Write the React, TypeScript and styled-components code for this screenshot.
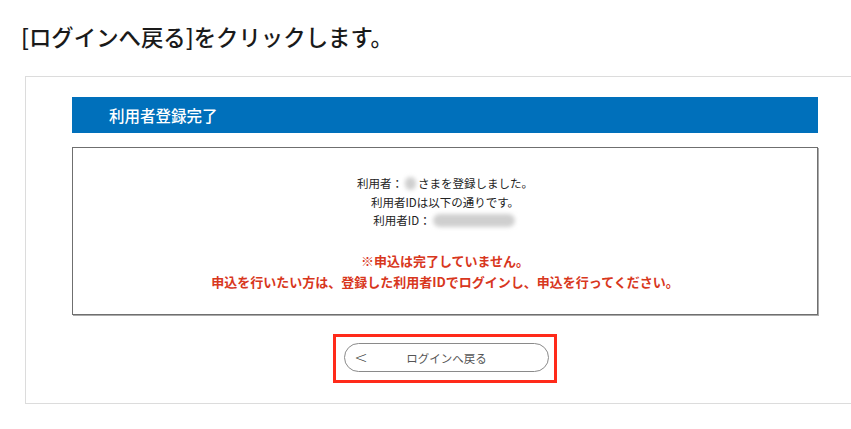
import React from "react";
import styled, { createGlobalStyle } from "styled-components";

const Global = createGlobalStyle`
  html, body { margin: 0; padding: 0; background: #fff; overflow: hidden; }
  body { font-family: "Noto Sans CJK JP", "Noto Sans", sans-serif; color: #222; }
`;

const Page = styled.div`
  width: 851px;
  height: 429px;
  overflow: hidden;
  padding-top: 21px;
  box-sizing: border-box;
`;

const Heading = styled.h1`
  margin: 0 0 0 21px;
  font-size: 22.4px;
  font-weight: 500;
  line-height: 30px;
  color: #1a1a1a;
`;

const Frame = styled.section`
  margin: 25px 0 0 25px;
  width: 860px;
  border: 1px solid #dcdcdc;
  padding: 20px 0 20px 46px;
  box-sizing: border-box;
`;

const Inner = styled.div`
  width: 746px;
  display: flex;
  flex-direction: column;
  align-items: center;
`;

const TitleBar = styled.div`
  align-self: stretch;
  height: 36px;
  background: #0070bb;
  color: #fff;
  font-size: 15.5px;
  font-weight: 500;
  display: flex;
  align-items: center;
  padding-left: 37px;
`;

const Box = styled.div`
  align-self: stretch;
  margin-top: 14px;
  height: 168px;
  border: 1px solid #6f6f6f;
  box-shadow: 1px 1px 0 #aaa;
  box-sizing: border-box;
  display: flex;
  flex-direction: column;
  align-items: center;
  padding-top: 26px;
`;

const Info = styled.p`
  margin: 0;
  font-size: 11.5px;
  line-height: 18.5px;
  color: #222;
  text-align: center;
`;

const Blur = styled.span<{ $w: number }>`
  display: inline-block;
  width: ${(p) => p.$w}px;
  height: 13px;
  border-radius: 7px;
  background: #cfcfcf;
  filter: blur(2px);
  vertical-align: -2px;
  margin: 0 2px;
`;

const Notice = styled.p`
  margin: 20px 0 0;
  font-size: 13px;
  font-weight: 700;
  line-height: 21px;
  color: #d8371d;
  text-align: center;
`;

const Highlight = styled.div`
  margin-top: 19px;
  border: 3px solid #ff2a1a;
  padding: 6px 5px 8px 8px;
  display: flex;
`;

const BackButton = styled.button`
  width: 205px;
  height: 29px;
  border: 1px solid #8a8a8a;
  border-radius: 15px;
  background: #fff;
  display: flex;
  align-items: center;
  padding: 0 0 0 8px;
  font-family: inherit;
  font-size: 11.5px;
  color: #555;
  cursor: pointer;
`;

const Chevron = styled.span`
  font-family: "DejaVu Sans", sans-serif;
  font-size: 16px;
  font-weight: 300;
  color: #333;
  width: 16px;
  line-height: 1;
`;

const ButtonLabel = styled.span`
  flex: 1;
  text-align: center;
  padding-right: 24px;
`;

export default function App() {
  return (
    <Page>
      <Global />
      <Heading>[ログインへ戻る]をクリックします。</Heading>
      <Frame>
        <Inner>
          <TitleBar>利用者登録完了</TitleBar>
          <Box>
            <Info>
              利用者：<Blur $w={11} />さまを登録しました。
              <br />
              利用者IDは以下の通りです。
              <br />
              利用者ID：<Blur $w={82} />
            </Info>
            <Notice>
              ※申込は完了していません。
              <br />
              申込を行いたい方は、登録した利用者IDでログインし、申込を行ってください。
            </Notice>
          </Box>
          <Highlight>
            <BackButton>
              <Chevron>&lt;</Chevron>
              <ButtonLabel>ログインへ戻る</ButtonLabel>
            </BackButton>
          </Highlight>
        </Inner>
      </Frame>
    </Page>
  );
}
